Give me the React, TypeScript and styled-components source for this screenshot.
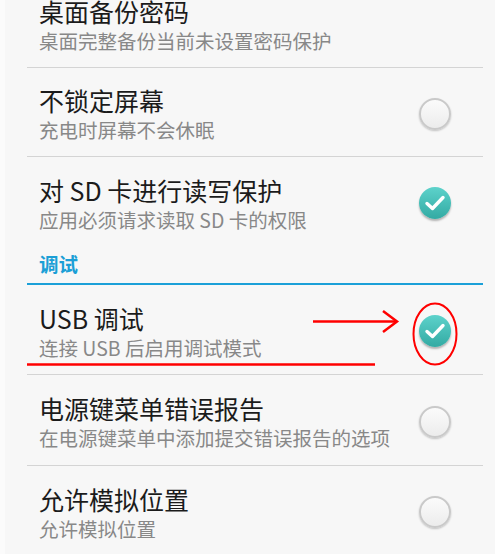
import React from "react";
import styled, { createGlobalStyle } from "styled-components";

const Global = createGlobalStyle`
  html, body { margin: 0; padding: 0; background: #f7f7f7; }
  body { font-family: "Noto Sans CJK SC", "Noto Sans", sans-serif; overflow: hidden; }
`;

const Screen = styled.div`
  position: relative;
  width: 495px;
  height: 554px;
  overflow: hidden;
  background: linear-gradient(to right, #fbfbfb 0 5px, #f7f7f7 5px);
`;

const List = styled.div`
  display: flex;
  flex-direction: column;
  margin: -21px 12px 0 27px;
`;

const Row = styled.div<{ $divider?: boolean; $h?: number }>`
  display: flex;
  align-items: center;
  justify-content: space-between;
  height: ${(p) => p.$h ?? 89}px;
  box-sizing: border-box;
  padding: 0 32px 0 12px;
  border-bottom: ${(p) => (p.$divider ? "1px solid #d4d4d4" : "none")};
`;

const Texts = styled.div`
  display: flex;
  flex-direction: column;
  padding-top: 6px;
`;

const Title = styled.div`
  font-size: 25px;
  line-height: 29px;
  color: #1b1b1b;
  white-space: nowrap;
`;

const Summary = styled.div`
  font-size: 19.5px;
  line-height: 29px;
  color: #888888;
  white-space: nowrap;
`;

const Category = styled.div`
  display: flex;
  align-items: center;
  height: 39px;
  box-sizing: border-box;
  padding: 0 12px 2px;
  border-bottom: 2px solid #1ba0d8;
  font-size: 19.5px;
  font-weight: 700;
  color: #1b9fd6;
`;

const Box = styled.div<{ $checked?: boolean }>`
  flex: none;
  width: 32px;
  height: 32px;
  margin-top: 3px;
  border-radius: 50%;
  box-sizing: border-box;
  display: flex;
  align-items: center;
  justify-content: center;
  ${(p) =>
    p.$checked
      ? `background: linear-gradient(#5dd2cb, #33aaa3);
         box-shadow: 0 2px 2px rgba(0,0,0,0.28);`
      : `background: linear-gradient(#fbfbfb, #ececec);
         border: 2px solid #c9c9c9;
         box-shadow: 0 1px 2px rgba(0,0,0,0.22);`}
`;

const Overlay = styled.svg`
  position: absolute;
  left: 0;
  top: 0;
  pointer-events: none;
`;

const Check = () => (
  <svg width="24" height="20" viewBox="0 0 24 20">
    <path d="M4 10.5 L9.5 15.5 L20 4.5" fill="none" stroke="#fff" strokeWidth="3.4" strokeLinecap="round" strokeLinejoin="round" />
  </svg>
);

type Item = { title: string; summary: string; checked?: boolean; toggle?: boolean; divider?: boolean; h?: number };

const Pref = ({ title, summary, checked, toggle = true, divider, h }: Item) => (
  <Row $divider={divider} $h={h}>
    <Texts>
      <Title>{title}</Title>
      <Summary>{summary}</Summary>
    </Texts>
    {toggle && <Box $checked={checked}>{checked && <Check />}</Box>}
  </Row>
);

export default function App() {
  return (
    <>
      <Global />
      <Screen>
        <List>
          <Pref title="桌面备份密码" summary="桌面完整备份当前未设置密码保护" toggle={false} divider />
          <Pref title="不锁定屏幕" summary="充电时屏幕不会休眠" divider />
          <Pref title="对 SD 卡进行读写保护" summary="应用必须请求读取 SD 卡的权限" checked />
          <Category>调试</Category>
          <Pref title="USB 调试" summary="连接 USB 后启用调试模式" checked divider h={90} />
          <Pref title="电源键菜单错误报告" summary="在电源键菜单中添加提交错误报告的选项" divider h={91} />
          <Pref title="允许模拟位置" summary="允许模拟位置" />
        </List>
        <Overlay width="495" height="554" viewBox="0 0 495 554">
          <line x1="313" y1="321.5" x2="396" y2="321.5" stroke="#f00" strokeWidth="2.5" />
          <polyline points="383,311 397,321.5 383,332" fill="none" stroke="#f00" strokeWidth="2.5" />
          <ellipse cx="435" cy="334" rx="21.5" ry="30.5" fill="none" stroke="#f00" strokeWidth="2" />
          <line x1="27" y1="364.5" x2="375" y2="364.5" stroke="#f00" strokeWidth="2.5" />
        </Overlay>
      </Screen>
    </>
  );
}
